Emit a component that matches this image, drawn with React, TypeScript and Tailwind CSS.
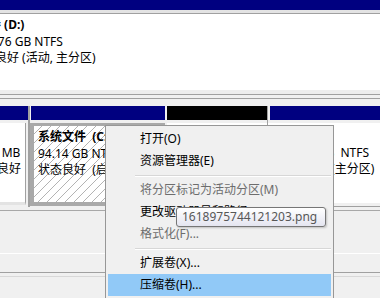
import type { ReactNode } from "react";

const hatch =
  "bg-[image:repeating-linear-gradient(135deg,#ffffff_0px,#ffffff_5.3px,#b3b3b3_5.3px,#b3b3b3_6.36px)]";

type Item = { label: string; disabled?: boolean; active?: boolean } | "sep";

const items: Item[] = [
  { label: "打开(O)" },
  { label: "资源管理器(E)" },
  "sep",
  { label: "将分区标记为活动分区(M)", disabled: true },
  { label: "更改驱动器号和路径(C)..." },
  { label: "格式化(F)...", disabled: true },
  "sep",
  { label: "扩展卷(X)..." },
  { label: "压缩卷(H)...", active: true },
];

function Line({ children, className = "" }: { children?: ReactNode; className?: string }) {
  return <div className={`h-[16.5px] whitespace-nowrap ${className}`}>{children}</div>;
}

function ContextMenu() {
  return (
    <div className="absolute left-[105px] top-[125px] h-[176px] w-[229px] border border-[#979797] bg-[#f0f0f0] pt-[2px]">
      {items.map((item, i) =>
        item === "sep" ? (
          <div key={i} className="h-[7px] pt-[3px]">
            <div className="ml-[29px] mr-[2px] h-px bg-[#d7d7d7]" />
            <div className="ml-[29px] mr-[2px] h-px bg-white" />
          </div>
        ) : (
          <div
            key={i}
            className={`mx-[2px] flex h-[22px] items-center pl-[32px] whitespace-nowrap ${
              item.active ? "bg-[#91c9f7]" : ""
            } ${item.disabled ? "text-[#6d6d6d]" : "text-black"}`}
          >
            {item.label}
          </div>
        )
      )}
    </div>
  );
}

function Tooltip() {
  return (
    <div className="absolute left-[176px] top-[207px] flex h-[20px] w-[150px] items-center rounded-[3px] border border-[#767676] bg-linear-to-b from-white to-[#e4e5f0] pl-[5px] text-[#575757] shadow-[1px_1px_2px_rgba(0,0,0,0.2)] whitespace-nowrap">
      1618975744121203.png
    </div>
  );
}

export default function App() {
  return (
    <div className="relative h-[298px] w-[380px] overflow-hidden bg-[#f0f0f0] font-['Noto_Sans','Noto_Sans_CJK_SC',sans-serif] text-[12px] text-black">
      {/* D: partition */}
      <div className="h-[10px] bg-[#000080]" />
      <div className="h-[3px] bg-[#e3e3e3]" />
      <div className="h-px bg-[#a0a0a0]" />
      <div className="h-[76px] overflow-hidden bg-white pt-[3px] leading-[16.5px]">
        <Line className="ml-[-35px] font-bold">新加卷 (D:)</Line>
        <Line className="ml-[-26px]">146.76 GB NTFS</Line>
        <Line className="ml-[-29px]">状态良好 (活动, 主分区)</Line>
      </div>
      <div className="h-[4px] bg-[#ededed]" />
      <div className="h-px bg-[#a0a0a0]" />
      <div className="h-[3px]" />
      <div className="h-px bg-[#a0a0a0]" />
      <div className="h-[7px]" />

      {/* next disk */}
      <div className="flex h-[101px] leading-[16.5px]">
        <div className="flex w-[28px] flex-col">
          <div className="h-[14px] bg-[#000080]" />
          <div className="h-[3px]" />
          <div className="h-[82px] w-[26px] overflow-hidden border-r border-b-[3px] border-r-[#a0a0a0] border-b-[#e3e3e3] bg-white pt-[5px]">
            <Line />
            <Line className="ml-[-22px]">100 MB</Line>
            <Line className="ml-[-27px]">状态良好</Line>
          </div>
        </div>

        <div className="flex w-[137px] flex-col border-l-2 border-[#a0a0a0]">
          <div className="ml-px h-[14px] bg-[#000080]" />
          <div className="h-[3px]" />
          <div className="h-[83px] overflow-hidden border-t-[3px] border-l-[4px] border-b-[4px] border-[#a9a9a9] bg-[#a9a9a9]">
            <div className={`h-full pl-[4px] pt-[3px] ${hatch}`}>
              <Line className="font-bold">系统文件&nbsp; (C:)</Line>
              <Line>94.14 GB NTFS</Line>
              <Line>状态良好&nbsp; (启动, 页面文件, 故障转储, 主分区)</Line>
            </div>
          </div>
        </div>

        <div className="flex w-[102px] flex-col">
          <div className="ml-[2px] h-[14px] bg-black" />
          <div className="h-[3px]" />
          <div className="ml-[2px] h-[80px] bg-white" />
        </div>

        <div className="flex w-[113px] flex-col border-l border-[#a0a0a0]">
          <div className="ml-[2px] h-[14px] bg-[#000080]" />
          <div className="h-[3px]" />
          <div className="h-[80px] overflow-hidden bg-white pl-[12px] pt-[5px]">
            <Line className="font-bold">软件 (E:)</Line>
            <Line className="ml-[-3px]">200.00 GB&nbsp; NTFS</Line>
            <Line>状态良好 (主分区)</Line>
          </div>
          <div className="h-[3px]" />
          <div className="h-px bg-[#a0a0a0]" />
        </div>
      </div>

      <div className="h-[3px]" />
      <div className="h-px bg-[#a8a8a8]" />
      <div className="h-[42px]" />
      <div className="h-px bg-white" />
      <div className="h-[18px]" />
      <div className="h-px bg-[#a0a0a0]" />
      <div className="h-[3px]" />
      <div className="h-px bg-[#d8d8d8]" />

      <ContextMenu />
      <Tooltip />
    </div>
  );
}
